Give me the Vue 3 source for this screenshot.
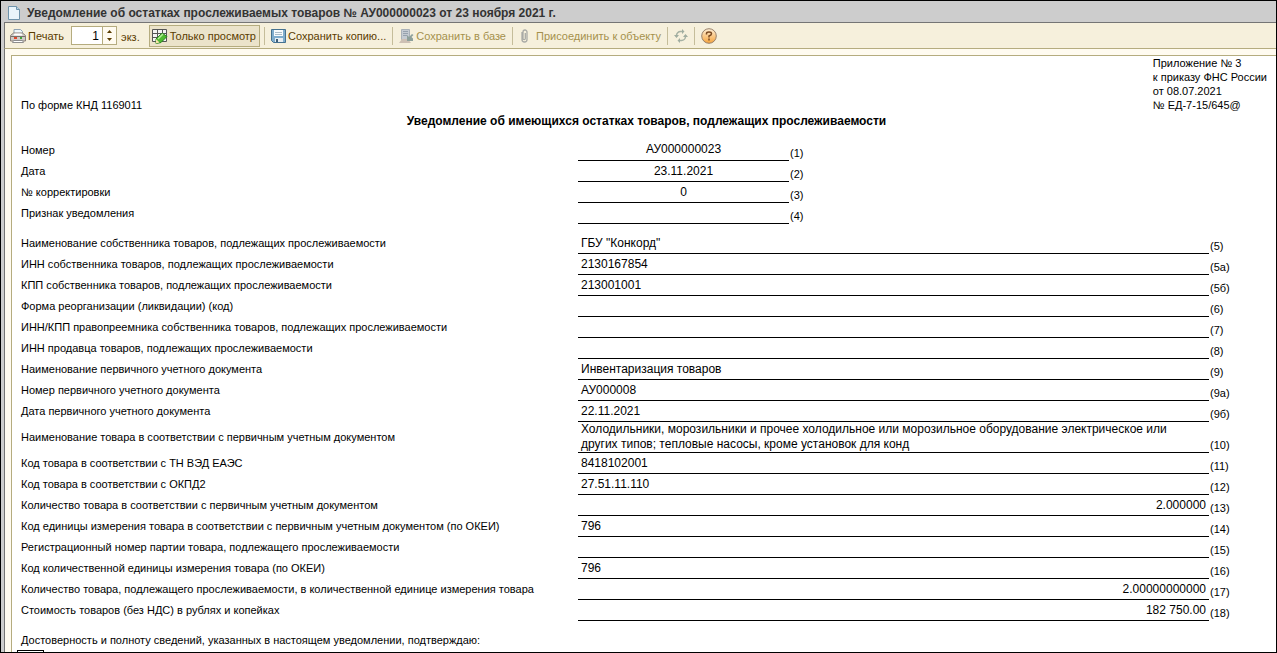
<script setup>
const head = [
  { label: 'Номер', value: 'АУ000000023', mark: '(1)' },
  { label: 'Дата', value: '23.11.2021', mark: '(2)' },
  { label: '№ корректировки', value: '0', mark: '(3)' },
  { label: 'Признак уведомления', value: '', mark: '(4)' }
]
const rows = [
  { label: 'Наименование собственника товаров, подлежащих прослеживаемости', value: 'ГБУ "Конкорд"', mark: '(5)' },
  { label: 'ИНН собственника товаров, подлежащих прослеживаемости', value: '2130167854', mark: '(5а)' },
  { label: 'КПП собственника товаров, подлежащих прослеживаемости', value: '213001001', mark: '(5б)' },
  { label: 'Форма реорганизации (ликвидации) (код)', value: '', mark: '(6)' },
  { label: 'ИНН/КПП правопреемника собственника товаров, подлежащих прослеживаемости', value: '', mark: '(7)' },
  { label: 'ИНН продавца товаров, подлежащих прослеживаемости', value: '', mark: '(8)' },
  { label: 'Наименование первичного учетного документа', value: 'Инвентаризация товаров', mark: '(9)' },
  { label: 'Номер первичного учетного документа', value: 'АУ000008', mark: '(9а)' },
  { label: 'Дата первичного учетного документа', value: '22.11.2021', mark: '(9б)' },
  { label: 'Наименование товара в соответствии с первичным учетным документом', value: 'Холодильники, морозильники и прочее холодильное или морозильное оборудование электрическое или других типов; тепловые насосы, кроме установок для конд', mark: '(10)', tall: true },
  { label: 'Код товара в соответствии с ТН ВЭД ЕАЭС', value: '8418102001', mark: '(11)' },
  { label: 'Код товара в соответствии с ОКПД2', value: '27.51.11.110', mark: '(12)' },
  { label: 'Количество товара в соответствии с первичным учетным документом', value: '2.000000', mark: '(13)', right: true },
  { label: 'Код единицы измерения товара в соответствии с первичным учетным документом (по ОКЕИ)', value: '796', mark: '(14)' },
  { label: 'Регистрационный номер партии товара, подлежащего прослеживаемости', value: '', mark: '(15)' },
  { label: 'Код количественной единицы измерения товара (по ОКЕИ)', value: '796', mark: '(16)' },
  { label: 'Количество товара, подлежащего прослеживаемости, в количественной единице измерения товара', value: '2.00000000000', mark: '(17)', right: true },
  { label: 'Стоимость товаров (без НДС) в рублях и копейках', value: '182 750.00', mark: '(18)', right: true }
]
</script>

<template>
  <div class="window">
    <header class="titlebar">
      <svg width="14" height="16" viewBox="0 0 14 16" aria-hidden="true">
        <path d="M1.5 1.5h8l3 3v10h-11z" fill="#e9f4fb" stroke="#6f93ab" />
        <path d="M9.5 1.5v3h3" fill="#b9d5e6" stroke="#6f93ab" />
      </svg>
      <h1>Уведомление об остатках прослеживаемых товаров № АУ000000023 от 23 ноября 2021 г.</h1>
    </header>

    <div class="toolbar" role="toolbar" aria-label="Действия с документом">
      <button class="tool" type="button">
        <svg width="16" height="16" viewBox="0 0 16 16" aria-hidden="true">
          <path d="M4 6V1.500h6.500l2 2V6" fill="#eef6fb" stroke="#8fa3b3" />
          <path d="M.500 7.500l3-2.500h9l3 2.500v5.500H.500z" fill="#cfcbc7" stroke="#8b8078" />
          <path d="M4.500 5.500h7l1 2h-9z" fill="#fff" />
          <path d="M1 8.500h14" stroke="#77706b" />
          <path d="M4 10h3" stroke="#e0472b" stroke-width="2" />
          <path d="M10 10h2" stroke="#45a03c" stroke-width="2" />
          <path d="M3.500 12.500h9l1 2h-11z" fill="#fff" stroke="#8d8d8d" />
        </svg>
        Печать
      </button>
      <span class="spin">
        <input id="copies" type="text" value="1" />
        <span class="arrows">
          <button type="button" aria-label="Больше"><svg width="5" height="3" viewBox="0 0 5 3"><path d="M0 3h5L2.500 0z" fill="#5a3c00" /></svg></button>
          <button type="button" aria-label="Меньше"><svg width="5" height="3" viewBox="0 0 5 3"><path d="M0 0h5L2.500 3z" fill="#5a3c00" /></svg></button>
        </span>
      </span>
      <label class="unit" for="copies">экз.</label>
      <button class="tool pressed" type="button" aria-pressed="true">
        <svg width="17" height="16" viewBox="0 0 17 16" aria-hidden="true">
          <path d="M1.500 1.500h14v12h-14zM1.500 5.500h14M1.500 9.500h14M6.500 1.500v12M11.500 1.500v12" fill="#f3f3f3" stroke="#555" />
          <path d="M5 11l6-6 5 3.500-6 6-5 1z" fill="#4fbb31" stroke="#2b8422" />
          <path d="M7 11l5-5" stroke="#b5ee9a" stroke-width="1.500" />
          <path d="M5 11l3.500 3.500-3.500 1z" fill="#f5e2a8" />
        </svg>
        Только просмотр
      </button>
      <i class="sep"></i>
      <button class="tool" type="button">
        <svg width="15" height="16" viewBox="0 0 15 16" aria-hidden="true">
          <path d="M.500 1.500h14v13h-12l-2-2z" fill="#7fadcd" stroke="#45718f" />
          <path d="M3 2h9v6H3z" fill="#f7fbfd" />
          <path d="M4 4.500h7M4 6.500h7" stroke="#a9bcc8" />
          <path d="M4 10h8v4H4z" fill="#e8eef2" />
          <path d="M5 11h2v3H5z" fill="#3d5f77" />
        </svg>
        Сохранить копию...
      </button>
      <i class="sep"></i>
      <button class="tool" type="button" disabled>
        <svg width="15" height="16" viewBox="0 0 15 16" aria-hidden="true">
          <path d="M2.500 1.500h8v10h-8z" fill="#c4cbd2" stroke="#a9b1b8" />
          <path d="M4 3.500h5M4 5.500h5M4 7.500h4" stroke="#96a2ae" />
          <path d="M0 15l3-4h6l3 4z" fill="#cdc0b4" />
          <path d="M14.500 7l-2 2 1.500 1.500v2.500H8V7l2 2 3-3z" fill="#8da09b" />
        </svg>
        Сохранить в базе
      </button>
      <i class="sep"></i>
      <button class="tool" type="button" disabled>
        <svg width="15" height="16" viewBox="0 0 15 16" aria-hidden="true">
          <path d="M3 4v7.500a2.500 2.500 0 0 0 5 0V4a2 2 0 0 0-4 0v6.500a1 1 0 0 0 2.300 0V5" fill="none" stroke="#a9aaa6" stroke-width="1.300" />
        </svg>
        Присоединить к объекту
      </button>
      <i class="sep"></i>
      <button class="tool" type="button" disabled aria-label="Обновить">
        <svg width="14" height="14" viewBox="0 0 14 14" aria-hidden="true">
          <path d="M2.500 8V6.500a4 4 0 0 1 4-4H9M11.500 6v1.500a4 4 0 0 1-4 4H5" fill="none" stroke="#a6b1a3" stroke-width="1.500" />
          <path d="M0 6h5L2.500 9zM9 8h5l-2.500-3zM8 0v5l2.500-2.500zM6 9v5l-2.500-2.500z" fill="#a0ada0" />
        </svg>
      </button>
      <i class="sep"></i>
      <button class="tool" type="button" aria-label="Справка">
        <svg width="16" height="16" viewBox="0 0 16 16" aria-hidden="true">
          <defs>
            <linearGradient id="helpFill" x1="0" y1="0" x2="0" y2="1">
              <stop offset="0" stop-color="#fff0d6" />
              <stop offset="1" stop-color="#f5a33c" />
            </linearGradient>
          </defs>
          <circle cx="8" cy="8" r="7.300" fill="url(#helpFill)" stroke="#98816b" />
          <path d="M5.500 6.500V5.500Q5.500 4 8 4t2.500 1.700Q10.500 7 8 8v1.500M8 10.500v2" fill="none" stroke="#7b4a22" stroke-width="1.500" />
        </svg>
      </button>
    </div>

    <main class="workspace">
      <article class="sheet">
        <div class="intro">
          <p>По форме КНД 1169011</p>
          <p class="appendix">Приложение № 3<br />к приказу ФНС России<br />от 08.07.2021<br />№ ЕД-7-15/645@</p>
        </div>
        <h2>Уведомление об имеющихся остатках товаров, подлежащих прослеживаемости</h2>

        <table class="head">
          <tbody>
            <tr v-for="r in head" :key="r.mark">
              <th scope="row">{{ r.label }}</th>
              <td class="value center">{{ r.value }}</td>
              <td class="mark">{{ r.mark }}</td>
            </tr>
          </tbody>
        </table>

        <table class="body">
          <tbody>
            <tr v-for="r in rows" :key="r.mark" :class="{ tall: r.tall }">
              <th scope="row">{{ r.label }}</th>
              <td class="value" :class="{ right: r.right }">{{ r.value }}</td>
              <td class="mark">{{ r.mark }}</td>
            </tr>
          </tbody>
        </table>

        <p class="confirm">Достоверность и полноту сведений, указанных в настоящем уведомлении, подтверждаю:</p>
        <div class="cell"></div>
      </article>
    </main>
  </div>
</template>

<style>
html, body { margin: 0; overflow: hidden; }
</style>

<style scoped>
* { box-sizing: border-box; }
.window {
  display: flex;
  flex-direction: column;
  height: 100vh;
  overflow: hidden;
  border: 1px solid #000;
  padding-left: 3px;
  background: #cdcdcd;
  color: #000;
  font: 11px/14px "Liberation Sans", Arial, sans-serif;
}
.titlebar {
  display: flex;
  align-items: center;
  gap: 6px;
  flex: none;
  height: 21px;
  padding: 2px 0 0 3px;
}
h1 {
  margin: 0;
  color: #333;
  font: bold 12px/16px "Liberation Sans", Arial, sans-serif;
  white-space: nowrap;
}
.toolbar {
  display: flex;
  align-items: center;
  flex: none;
  height: 27px;
  border: 1px solid #757575;
  border-right: 0;
  border-bottom-color: #b5ac7f;
  padding-left: 3px;
  background: #f6f0dc;
}
button, input { font: inherit; }
.tool {
  display: flex;
  align-items: center;
  gap: 2px;
  height: 21px;
  padding: 0 1px;
  border: 1px solid transparent;
  background: none;
  color: #5a3c00;
  white-space: nowrap;
}
.tool:disabled { color: #a5904c; }
.pressed {
  height: 22px;
  padding-right: 3px;
  border-color: #b5ac7f;
  background: #ebe3ca;
}
.spin {
  display: flex;
  height: 19px;
  width: 46px;
  margin-left: 5px;
  border: 1px solid #b5ac7f;
  background: #fff;
}
.spin input {
  flex: 1;
  min-width: 0;
  border: 0;
  padding: 0 3px;
  background: #fff;
  font-size: 12px;
  text-align: right;
  outline: 0;
}
.arrows {
  display: flex;
  flex-direction: column;
  width: 14px;
  border-left: 1px solid #b5ac7f;
  background: #fffbf0;
}
.arrows button {
  display: flex;
  flex: 1;
  align-items: center;
  justify-content: center;
  padding: 0;
  border: 0;
  background: none;
}
.unit {
  margin: 0 9px 0 4px;
  padding-top: 3px;
  color: #5a3c00;
}
.sep {
  width: 1px;
  height: 18px;
  margin: 0 4px;
  background: #c5bd9a;
}
.workspace {
  flex: 1;
  min-height: 0;
  border-left: 1px solid #757575;
  padding: 6px 0 0 6px;
  background: #fffbf0;
}
.sheet {
  height: 100%;
  border: solid #b5ac7f;
  border-width: 1px 0 0 1px;
  padding-left: 5px;
  background: #fff;
  overflow: hidden;
}
p { margin: 0; }
.intro {
  display: flex;
  justify-content: space-between;
  align-items: flex-end;
  padding: 0 9px 0 4px;
}
.appendix { white-space: nowrap; }
h2 {
  margin: 0;
  font: bold 12px/18px "Liberation Sans", Arial, sans-serif;
  text-align: center;
}
table { border-collapse: collapse; table-layout: fixed; }
.head { width: 813px; margin-top: 9px; }
.body { width: 100%; margin-top: 9px; }
tr { height: 21px; }
tr.tall { height: 31px; }
th {
  width: 561px;
  padding: 0 4px;
  font-weight: normal;
  text-align: left;
  white-space: nowrap;
  vertical-align: middle;
}
.value {
  padding: 3px 3px 0;
  border-bottom: 1px solid #000;
  font-size: 12px;
  line-height: 15px;
  vertical-align: top;
}
.tall .value { padding-top: 0; }
.center { text-align: center; }
.right { text-align: right; }
.mark {
  padding: 0 1px;
  line-height: 13px;
  vertical-align: bottom;
}
.head .mark { width: 41px; }
.body .mark { width: 67px; padding-bottom: 1px; }
.confirm { padding: 12px 4px 3px; }
.cell { width: 27px; height: 20px; border: 1px solid #000; }
</style>
